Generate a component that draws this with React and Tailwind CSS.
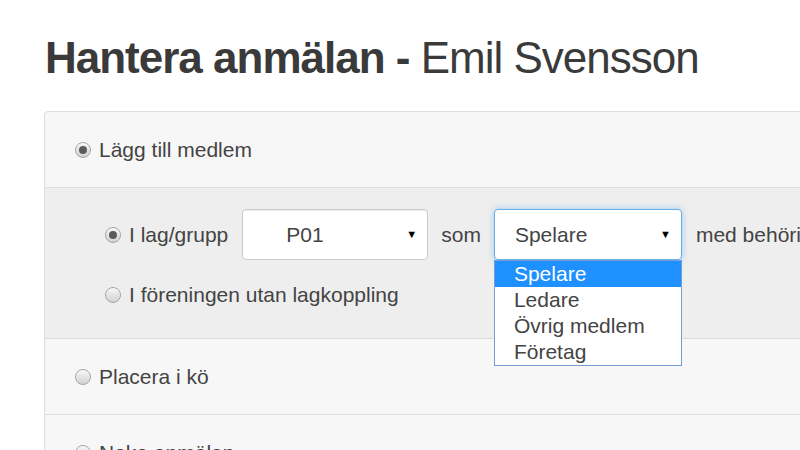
import React from "react";

function Radio({ checked }) {
  return (
    <span className="flex h-[16px] w-[16px] shrink-0 items-center justify-center rounded-full border border-[#a4a4a4] bg-gradient-to-b from-[#f6f6f6] to-[#d2d2d2] shadow-[inset_0_1px_1px_rgba(255,255,255,0.8)]">
      {checked && <span className="h-[8px] w-[8px] rounded-full bg-[#5a5a5a]" />}
    </span>
  );
}

function FakeSelect({ value, width, indent, focused, children }) {
  return (
    <div className="relative">
      <div
        className={
          "flex h-[51px] items-center justify-between rounded-[4px] border bg-white pr-[10px] " +
          (focused
            ? "border-[#66afe9] shadow-[0_0_6px_rgba(102,175,233,0.6)]"
            : "border-[#ccc] shadow-[inset_0_1px_1px_rgba(0,0,0,0.075)]")
        }
        style={{ width, paddingLeft: indent }}
      >
        <span>{value}</span>
        <span className="text-[11px] text-black">▼</span>
      </div>
      {children}
    </div>
  );
}

export default function App() {
  const options = ["Spelare", "Ledare", "Övrig medlem", "Företag"];

  return (
    <div className="h-[450px] w-[800px] overflow-hidden bg-white font-['Liberation_Sans',Arial,sans-serif] text-[21px] text-[#444]">
      <h1 className="ml-[45px] mt-[34px] whitespace-nowrap text-[44px] leading-[48px] tracking-[-1px] text-[#3a3a3a]">
        <span className="font-bold">Hantera anmälan - </span>
        Emil Svensson
      </h1>

      <div className="ml-[44px] mt-[29px] w-[800px] rounded-tl-[4px] border border-[#ddd] bg-[#f7f7f7]">
        {/* Lägg till medlem */}
        <div className="flex h-[76px] items-center gap-[8px] border-b border-[#ddd] pl-[30px]">
          <Radio checked />
          <span>Lägg till medlem</span>
        </div>

        {/* options */}
        <div className="flex h-[151px] flex-col border-b border-[#ddd] bg-[#eee] pl-[60px] pt-[21px]">
          <div className="flex items-center whitespace-nowrap">
            <Radio checked />
            <span className="ml-[8px]">I lag/grupp</span>
            <div className="ml-[14px]">
              <FakeSelect value="P01" width={186} indent={43} />
            </div>
            <span className="ml-[13px]">som</span>
            <div className="ml-[13px]">
              <FakeSelect value="Spelare" width={188} indent={20} focused>
                <ul className="absolute left-0 top-[51px] z-10 w-[188px] border border-[#7a9bd6] bg-white">
                  {options.map((o, i) => (
                    <li
                      key={o}
                      className={
                        "h-[26px] pl-[19px] leading-[26px] " +
                        (i === 0 ? "bg-[#1e90ff] text-white" : "text-[#444]")
                      }
                    >
                      {o}
                    </li>
                  ))}
                </ul>
              </FakeSelect>
            </div>
            <span className="ml-[14px]">med behörighet</span>
          </div>
          <div className="mt-[19px] flex items-center">
            <Radio />
            <span className="ml-[8px]">I föreningen utan lagkoppling</span>
          </div>
        </div>

        {/* Placera i kö */}
        <div className="flex h-[76px] items-center gap-[8px] border-b border-[#ddd] pl-[30px]">
          <Radio />
          <span>Placera i kö</span>
        </div>

        {/* Neka anmälan */}
        <div className="flex h-[76px] items-center gap-[8px] pl-[30px]">
          <Radio />
          <span>Neka anmälan</span>
        </div>
      </div>
    </div>
  );
}
